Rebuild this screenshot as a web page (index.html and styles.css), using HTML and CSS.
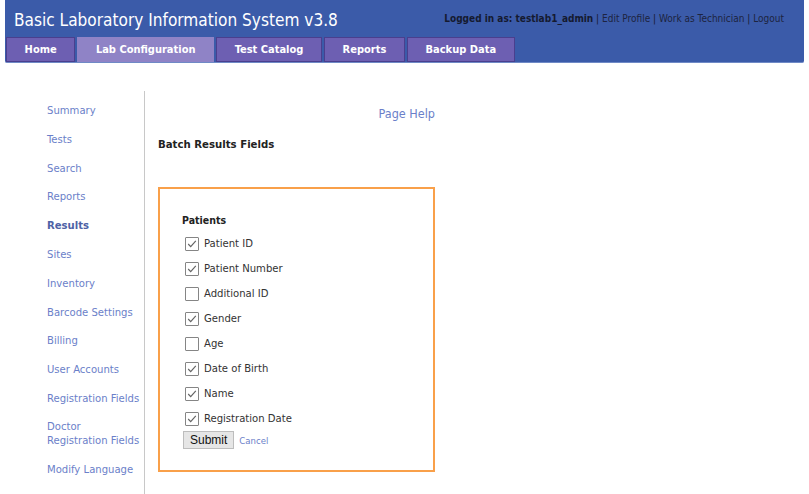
FILE: index.html
```html
<!DOCTYPE html>
<html>
<head>
<meta charset="utf-8">
<title>BLIS - Lab Configuration</title>
<link rel="stylesheet" href="styles.css">
</head>
<body>
<div class="header">
  <div class="header-top">
    <div class="app-title">Basic Laboratory Information System v3.8</div>
    <div class="user-links"><b>Logged in as: testlab1_admin</b> | <a href="#">Edit Profile</a> | <a href="#">Work as Technician</a> | <a href="#">Logout</a></div>
  </div>
  <ul class="tabs">
    <li class="tab">Home</li>
    <li class="tab tab-active">Lab Configuration</li>
    <li class="tab">Test Catalog</li>
    <li class="tab">Reports</li>
    <li class="tab">Backup Data</li>
  </ul>
</div>
<div class="main">
  <div class="sidebar">
    <a class="side-link" href="#">Summary</a>
    <a class="side-link" href="#">Tests</a>
    <a class="side-link" href="#">Search</a>
    <a class="side-link" href="#">Reports</a>
    <a class="side-link side-current" href="#">Results</a>
    <a class="side-link" href="#">Sites</a>
    <a class="side-link" href="#">Inventory</a>
    <a class="side-link" href="#">Barcode Settings</a>
    <a class="side-link" href="#">Billing</a>
    <a class="side-link" href="#">User Accounts</a>
    <a class="side-link" href="#">Registration Fields</a>
    <a class="side-link side-two" href="#">Doctor<br>Registration Fields</a>
    <a class="side-link" href="#">Modify Language</a>
  </div>
  <div class="content">
    <div class="page-help"><a href="#">Page Help</a></div>
    <div class="page-title">Batch Results Fields</div>
    <form class="fields-box">
      <div class="group-title">Patients</div>
      <label class="field"><input type="checkbox" checked><span>Patient ID</span></label>
      <label class="field"><input type="checkbox" checked><span>Patient Number</span></label>
      <label class="field"><input type="checkbox"><span>Additional ID</span></label>
      <label class="field"><input type="checkbox" checked><span>Gender</span></label>
      <label class="field"><input type="checkbox"><span>Age</span></label>
      <label class="field"><input type="checkbox" checked><span>Date of Birth</span></label>
      <label class="field"><input type="checkbox" checked><span>Name</span></label>
      <label class="field"><input type="checkbox" checked><span>Registration Date</span></label>
      <div class="actions">
        <button type="button" class="submit-btn">Submit</button>
        <a class="cancel" href="#">Cancel</a>
      </div>
    </form>
  </div>
</div>
</body>
</html>
```
FILE: styles.css
```css
body {
  margin: 0;
  font-family: "DejaVu Sans Condensed", "DejaVu Sans", sans-serif;
  background: #ffffff;
  color: #222;
}
a { text-decoration: none; }

.header {
  margin: 0 5px;
  width: 799px;
  height: 63px;
  background: #3b5ba9;
  border-bottom: 1px solid #6f8ac6;
  box-sizing: border-box;
  border-radius: 0 0 2px 2px;
}
.header-top {
  height: 37px;
  display: flex;
  justify-content: space-between;
  align-items: flex-start;
}
.app-title {
  color: #fff;
  font-size: 17.1px;
  padding: 10px 0 0 9px;
}
.user-links {
  font-size: 10px;
  color: #151a30;
  padding: 13px 20px 0 0;
}
.user-links a { color: #1d2440; }
.tabs {
  list-style: none;
  margin: 0;
  padding: 0 0 0 1px;
  display: flex;
  gap: 2px;
}
.tab {
  height: 25px;
  box-sizing: border-box;
  border: 1px solid #4a3f8e;
  background: #6d5fb2;
  color: #fff;
  font-weight: bold;
  font-size: 11px;
  line-height: 23px;
  padding: 0 17.6px;
}
.tab-active {
  background: #8f83c6;
  border-color: #8f83c6;
}

.main {
  display: flex;
  margin-top: 28px;
}
.sidebar {
  width: 145px;
  box-sizing: border-box;
  border-right: 1px solid #c8c8c8;
  padding: 12px 0 0 47px;
  display: flex;
  flex-direction: column;
  gap: 13.8px;
  height: 410px;
}
.side-link {
  color: #6b7fc9;
  font-size: 11.2px;
  line-height: 15px;
  white-space: nowrap;
}
.side-two { line-height: 14px; }
.side-current {
  color: #4e62a6;
  font-weight: bold;
}

.content {
  width: 277px;
  margin-left: 13px;
  padding-top: 15px;
}
.page-help {
  text-align: right;
  font-size: 12.5px;
  line-height: 16px;
}
.page-help a { color: #6b7fc9; }
.page-title {
  font-weight: bold;
  font-size: 11.3px;
  line-height: 15px;
  margin-top: 15px;
  color: #222;
}
.fields-box {
  margin-top: 35px;
  border: 2px solid #f9a04a;
  height: 285px;
  box-sizing: border-box;
  padding: 24px 0 0 22px;
}
.group-title {
  font-weight: bold;
  font-size: 10.5px;
  line-height: 14px;
  margin-bottom: 4px;
}
.field {
  display: flex;
  align-items: center;
  height: 25px;
  font-size: 11.2px;
  color: #333;
}
.field input {
  appearance: none;
  -webkit-appearance: none;
  width: 14px;
  height: 14px;
  margin: 0 5px 0 3px;
  border: 1px solid #858585;
  border-radius: 1px;
  background: #fff;
  box-sizing: border-box;
}
.field input:checked {
  background: #fff url("data:image/svg+xml,%3Csvg xmlns='http://www.w3.org/2000/svg' width='12' height='12' viewBox='0 0 12 12'%3E%3Cpath d='M2.2 6 L4.7 8.6 L9.8 2.8' fill='none' stroke='%23666' stroke-width='1.2'/%3E%3C/svg%3E") no-repeat center;
}
.actions {
  display: flex;
  align-items: center;
  gap: 5px;
  margin-top: 0;
}
.submit-btn {
  font-family: "Liberation Sans", Arial, sans-serif;
  font-size: 12px;
  height: 18px;
  padding: 0 6px;
  margin-left: 1px;
  background: #e6e6e6;
  border: 1px solid #bdbdbd;
  border-radius: 0;
  color: #111;
}
.cancel {
  color: #6b7fc9;
  font-size: 9.5px;
}
```
